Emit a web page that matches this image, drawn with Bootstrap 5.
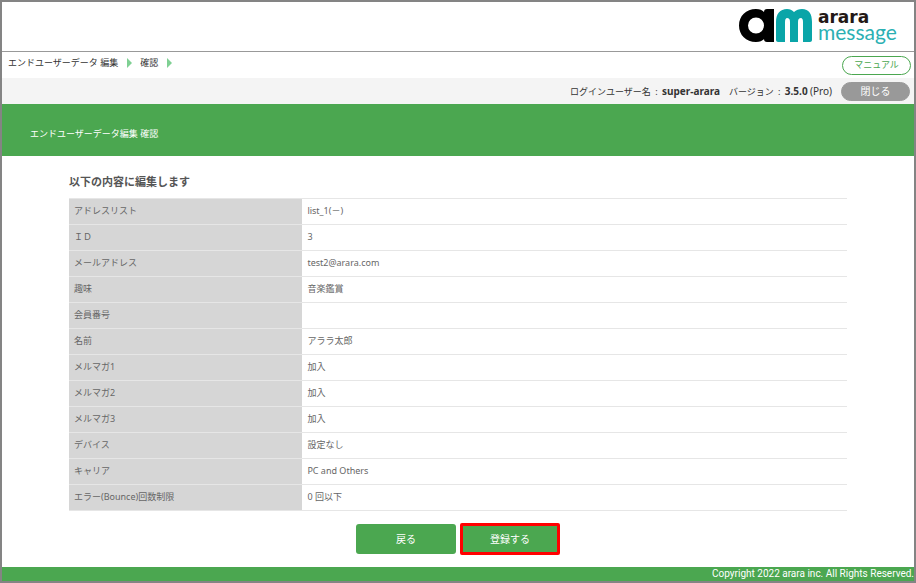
<!DOCTYPE html>
<html lang="ja">
<head>
<meta charset="utf-8">
<meta name="viewport" content="width=device-width, initial-scale=1">
<title>エンドユーザーデータ編集 確認 - arara message</title>
<link href="https://cdn.jsdelivr.net/npm/bootstrap@5.3.0/dist/css/bootstrap.min.css" rel="stylesheet">
<style>
:root { --brand: #4ba750; }
body { font-family: "Noto Sans", "Noto Sans CJK JP", sans-serif; font-size: 9px; line-height: 14px; color: #333; }
.app-frame { border: 2px solid #848484; }
.brand-bar { height: 50px; padding: 6px 17px 0 0; border-bottom: 1px solid #999; }
.crumb-bar { height: 26px; padding: 0 3px 0 6px; }
.crumb-bar nav { padding-bottom: 4px; }
.crumb-bar a { color: #333; }
.crumb-arrow { width: 0; height: 0; border: 5px solid transparent; border-left: 5px solid #7fd093; border-right: 0; margin: 0 8px 0 9px; }
.user-bar { height: 26px; padding: 0 4px 0 0; background: #f4f4f4; gap: 9px; }
.user-bar b, .user-bar .edition { font-size: 10px; }
.colon { padding: 0 2px; }
.pill { width: 69px; height: 19px; padding: 0; border-radius: 10px; line-height: 16px; font-size: 9px; }
.pill-manual { color: var(--brand); border: 1px solid var(--brand); background: #fff; }
.pill-close { color: #fff; background: #999; border: 1px solid #999; font-size: 10px; }
.title-band { height: 52px; padding: 8px 28px 0; background: var(--brand); color: #fff; font-size: 9px; line-height: 14px; }
.page-main { padding: 18px 67px 12px; }
.lead-title { font-size: 11px; line-height: 16px; color: #555; }
.detail { color: #666; table-layout: fixed; border-top: 1px solid #e6e6e6; }
.detail th, .detail td { height: 26px; padding: 0 5px 2px; border-bottom: 1px solid #e6e6e6; font-weight: 400; vertical-align: middle; }
.detail th { width: 30%; background: #d6d6d6; }
.act { width: 100px; height: 30px; padding: 0; font-size: 10px; line-height: 14px; border: 0; border-radius: 3px; background: var(--brand); color: #fff; }
.act-focus { height: 32px; border: 3px solid #f00; border-radius: 2px; }
.foot { background: var(--brand); color: #fff; font-family: Roboto, "Noto Sans", sans-serif; font-size: 10px; line-height: 14px; }
</style>
<script src="https://cdn.jsdelivr.net/npm/bootstrap@5.3.0/dist/js/bootstrap.bundle.min.js"></script>
</head>
<body>
<div class="app-frame d-flex flex-column min-vh-100">
  <header>
    <div class="brand-bar d-flex justify-content-end">
      <svg width="158" height="38" viewBox="0 0 158 38" role="img" aria-label="arara message">
        <path fill="#000" fill-rule="evenodd" d="M17 1c4 0 6 1 8 3 0-2 1-3 3-3h7v33h-7c-2 0-3-1-3-3-2 2-4 3-8 3C7 34 0 27 0 17.500S7 1 17 1zM17 9.500a8 8 0 1 0 0 16 8 8 0 0 0 0-16z"/>
        <path fill="#0aa5a8" d="M37 32V14C37 6 41 1 48 1c3 0 5 1 7 3 2-2 5-3 8-3 7 0 10 5 10 13v18c0 1-1 2-2 2h-7V14c0-3-1-4-2-4-2 0-3 1-3 4v20h-8V14c0-3-1-4-3-4-1 0-2 1-2 4v20h-7c-1 0-2-1-2-2z"/>
        <text x="79" y="15" font-family="DejaVu Sans" font-weight="700" font-size="17" fill="#231815">arara</text>
        <text x="79" y="32" font-family="Lato" font-weight="400" font-size="21" fill="#2bb0b3">message</text>
      </svg>
    </div>
    <div class="crumb-bar d-flex align-items-center justify-content-between">
      <nav class="d-flex align-items-center" aria-label="パンくず">
        <a class="text-decoration-none" href="#">エンドユーザーデータ 編集</a><span class="crumb-arrow"></span>
        <a class="text-decoration-none" href="#">確認</a><span class="crumb-arrow"></span>
      </nav>
      <button type="button" class="pill pill-manual">マニュアル</button>
    </div>
    <div class="user-bar d-flex align-items-center justify-content-end">
      <span>ログインユーザー名<span class="colon"> :</span> <b>super-arara</b></span>
      <span>バージョン<span class="colon"> :</span> <b>3.5.0</b> <span class="edition">(Pro)</span></span>
      <button type="button" class="pill pill-close">閉じる</button>
    </div>
  </header>
  <h1 class="title-band d-flex align-items-center mb-0 fw-normal">エンドユーザーデータ編集 確認</h1>
  <main class="page-main flex-grow-1">
    <h2 class="lead-title fw-bold mb-2">以下の内容に編集します</h2>
    <table class="detail w-100">
      <tbody>
        <tr><th scope="row">アドレスリスト</th><td>list_1(－)</td></tr>
        <tr><th scope="row">ＩＤ</th><td>3</td></tr>
        <tr><th scope="row">メールアドレス</th><td>test2@arara.com</td></tr>
        <tr><th scope="row">趣味</th><td>音楽鑑賞</td></tr>
        <tr><th scope="row">会員番号</th><td></td></tr>
        <tr><th scope="row">名前</th><td>アララ太郎</td></tr>
        <tr><th scope="row">メルマガ1</th><td>加入</td></tr>
        <tr><th scope="row">メルマガ2</th><td>加入</td></tr>
        <tr><th scope="row">メルマガ3</th><td>加入</td></tr>
        <tr><th scope="row">デバイス</th><td>設定なし</td></tr>
        <tr><th scope="row">キャリア</th><td>PC and Others</td></tr>
        <tr><th scope="row">エラー(Bounce)回数制限</th><td>0 回以下</td></tr>
      </tbody>
    </table>
    <div class="d-flex justify-content-center align-items-center gap-1 mt-2 pt-1">
      <button type="button" class="act">戻る</button>
      <button type="button" class="act act-focus">登録する</button>
    </div>
  </main>
  <footer class="foot text-end">Copyright 2022 arara inc. All Rights Reserved.</footer>
</div>
</body>
</html>
